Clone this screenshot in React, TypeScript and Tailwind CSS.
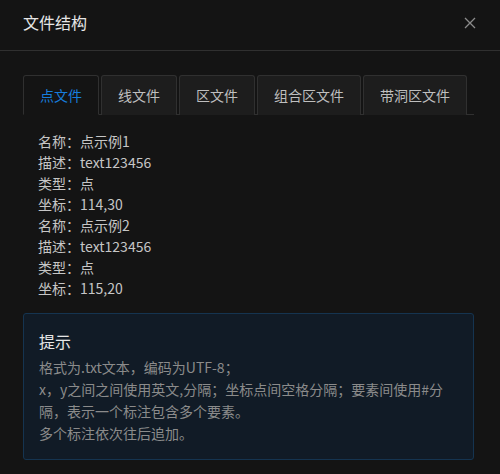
import { useState } from "react";

const tabs = ["点文件", "线文件", "区文件", "组合区文件", "带洞区文件"];

const pointRows = [
  { name: "点示例1", desc: "text123456", type: "点", coord: "114,30" },
  { name: "点示例2", desc: "text123456", type: "点", coord: "115,20" },
];

const App = () => {
  const [active, setActive] = useState(0);

  return (
    <div
      className="w-[500px] h-[474px] bg-[#141414] text-[#d9d9d9] overflow-hidden"
      style={{ fontFamily: '"Microsoft YaHei", "Noto Sans CJK SC", "Liberation Sans", sans-serif' }}
    >
      {/* Header */}
      <div className="h-[51px] flex items-center justify-between pl-[23px] pr-[24px] border-b border-[#303030]">
        <h2 className="text-[16px] leading-[22px] text-[#e6e6e6] -mt-[6px]">文件结构</h2>
        <button className="text-[#8c8c8c] -mt-[4px]">
          <svg width="12" height="12" viewBox="0 0 12 12" fill="none" stroke="currentColor" strokeWidth="1.3">
            <path d="M1 1 L11 11 M11 1 L1 11" />
          </svg>
        </button>
      </div>

      <div className="pl-[23px] w-[474px] pt-[24px]">
        {/* Tabs */}
        <div className="flex gap-[2px] h-[40px] border-b border-[#303030]">
          {tabs.map((t, i) => (
            <button
              key={t}
              onClick={() => setActive(i)}
              className={`h-[40px] px-[16px] text-[14px] rounded-t-[3px] border border-[#303030] ${
                i === active
                  ? "bg-[#141414] text-[#177ddc] border-b-[#141414]"
                  : "bg-[#1d1d1d] text-[#bfbfbf] border-b-0 h-[39px]"
              }`}
            >
              {t}
            </button>
          ))}
        </div>

        {/* Content */}
        <div className="pl-[15px] pt-[16px] text-[14px] leading-[21px] text-[#c6c6c6]">
          {pointRows.map((r) => (
            <div key={r.name}>
              <div>名称：{r.name}</div>
              <div>描述：{r.desc}</div>
              <div>类型：{r.type}</div>
              <div>坐标：{r.coord}</div>
            </div>
          ))}
        </div>

        {/* Tip */}
        <div className="mt-[14px] h-[147px] rounded-[3px] border border-[#153450] bg-[#111b26] px-[15px] pt-[15px]">
          <div className="text-[16px] leading-[24px] text-[#e6e6e6]">提示</div>
          <div className="mt-[3px] text-[14px] leading-[22px] text-[#8b8b8b]">
            <div>格式为.txt文本，编码为UTF-8；</div>
            <div>x，y之间之间使用英文,分隔；坐标点间空格分隔；要素间使用#分隔，表示一个标注包含多个要素。</div>
            <div>多个标注依次往后追加。</div>
          </div>
        </div>
      </div>
    </div>
  );
};

export default App;
